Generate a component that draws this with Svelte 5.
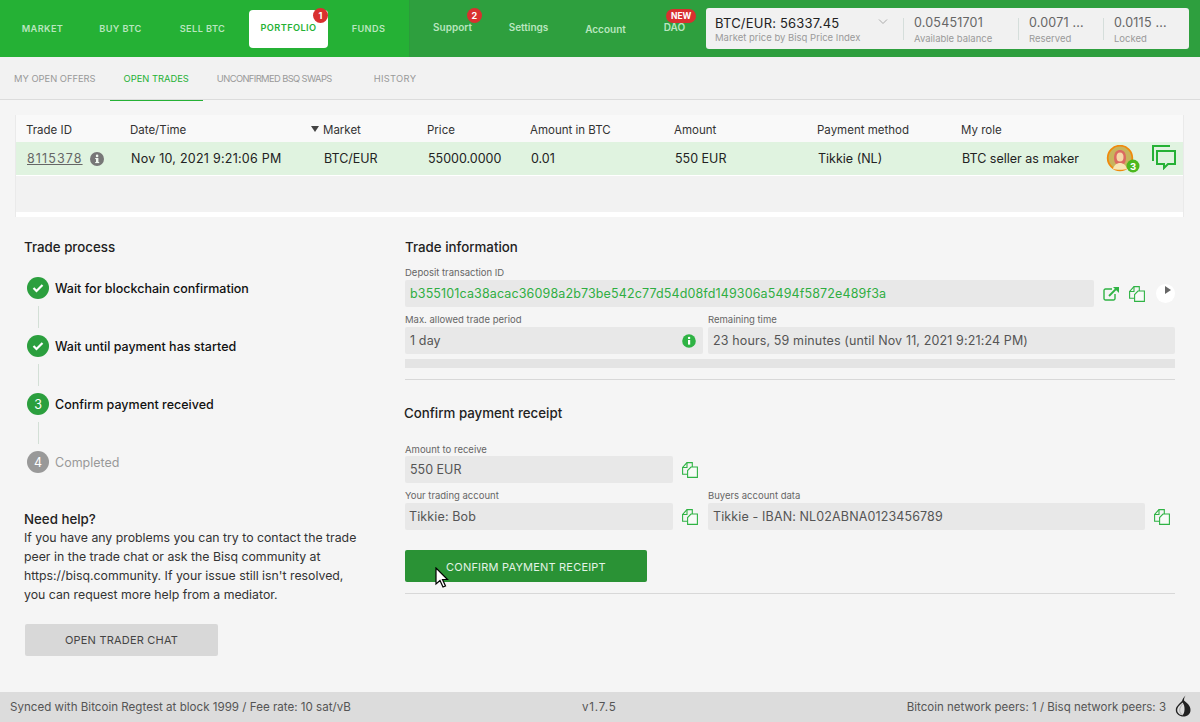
<script lang="ts">
  const mainNav = [
    { label: 'MARKET', w: 85 },
    { label: 'BUY BTC', w: 71 },
    { label: 'SELL BTC', w: 93 },
    { label: 'PORTFOLIO', w: 79, active: true, badge: '1' },
    { label: 'FUNDS', w: 81 },
  ]
  const sideNav = [
    { label: 'Support', w: 85, up: true, badge: '2' },
    { label: 'Settings', w: 67, up: true },
    { label: 'Account', w: 87, up: false },
    { label: 'DAO', w: 51, up: true, isNew: true },
  ]
  const tabs = ['MY OPEN OFFERS', 'OPEN TRADES', 'UNCONFIRMED BSQ SWAPS', 'HISTORY']
  const columns = ['Trade ID', 'Date/Time', 'Market', 'Price', 'Amount in BTC', 'Amount', 'Payment method', 'My role']
  const steps = [
    { label: 'Wait for blockchain confirmation', state: 'done' },
    { label: 'Wait until payment has started', state: 'done' },
    { label: 'Confirm payment received', state: 'current', n: 3 },
    { label: 'Completed', state: 'todo', n: 4 },
  ]
</script>

{#snippet copyIcon()}
  <svg class="icon" width="16" height="16" viewBox="0 0 16 16" fill="none" stroke="#2fb344" stroke-width="1.1">
    <path d="M5.500 12.300H.6V5.500L5 .6H10.300V5" />
    <path d="M5 .6V5.500H.6" />
    <path d="M9 5H15.400V15.400H5.600V8.500z" fill="#f8fbf8" />
  </svg>
{/snippet}

<div class="page">
  <header class="topbar">
    <nav class="main-nav">
      {#each mainNav as item}
        <div class="nav-item" class:active={item.active} style="width: {item.w}px">
          {item.label}
          {#if item.badge}<span class="badge">{item.badge}</span>{/if}
        </div>
      {/each}
    </nav>
    <nav class="side-nav">
      {#each sideNav as item}
        <div class="side-item" class:up={item.up} style="width: {item.w}px">
          <span class="side-label">
            {item.label}
            {#if item.badge}<span class="badge">{item.badge}</span>{/if}
            {#if item.isNew}<span class="badge new">NEW</span>{/if}
          </span>
        </div>
      {/each}
      <div class="balance-box">
        <div class="price-cell">
          <div class="price">BTC/EUR: 56337.45</div>
          <div class="caption">Market price by Bisq Price Index</div>
          <svg class="chevron" width="10" height="6" viewBox="0 0 10 6" fill="none" stroke="#aaa" stroke-width="1"><path d="M1 .5l4 4 4-4" /></svg>
        </div>
        <div class="bal-cell first">
          <div class="bal">0.05451701</div>
          <div class="caption">Available balance</div>
        </div>
        <div class="bal-cell second">
          <div class="bal">0.0071 ...</div>
          <div class="caption">Reserved</div>
        </div>
        <div class="bal-cell third">
          <div class="bal">0.0115 ...</div>
          <div class="caption">Locked</div>
        </div>
      </div>
    </nav>
  </header>

  <div class="tabs">
    {#each tabs as tab, i}
      <div class="tab" class:selected={i === 1}>{tab}</div>
    {/each}
  </div>

  <section class="table">
    <div class="row head">
      {#each columns as col, i}
        <div class="cell">
          {#if i === 2}<span class="sort"></span>{/if}{col}
        </div>
      {/each}
    </div>
    <div class="row selected-row">
      <div class="cell trade-id">
        <u>8115378</u>
        <svg width="14" height="14" viewBox="0 0 14 14"><circle cx="7" cy="7" r="7" fill="#777" /><rect x="6" y="6" width="2.400" height="5" fill="#f0f8f0" /><rect x="5.200" y="6" width="2" height="1.100" fill="#f0f8f0" /><rect x="5.200" y="10" width="4" height="1.100" fill="#f0f8f0" /><circle cx="7.100" cy="3.900" r="1.300" fill="#f0f8f0" /></svg>
      </div>
      <div class="cell date">Nov 10, 2021 9:21:06 PM</div>
      <div class="cell">BTC/EUR</div>
      <div class="cell">55000.0000</div>
      <div class="cell">0.01</div>
      <div class="cell">550 EUR</div>
      <div class="cell">Tikkie (NL)</div>
      <div class="cell">BTC seller as maker</div>
      <div class="row-icons">
        <svg class="avatar" width="34" height="32" viewBox="0 0 34 32">
          <circle cx="14" cy="13" r="12.300" fill="#c8b45c" stroke="#f08a0c" stroke-width="1.800" />
          <path d="M8 13c0-6 3-8 6-8s6 2 6 8c0 3-1 5-2 6h-8c-1-1-2-3-2-6z" fill="#dc6a60" />
          <ellipse cx="14" cy="12" rx="3.500" ry="4.500" fill="#f6d8a8" />
          <path d="M7 24c1-4 4-6 7-6s6 2 7 6c-2 1-12 1-14 0z" fill="#f8e6b4" />
          <circle cx="27" cy="21" r="6.500" fill="#4cb81e" />
          <text x="27" y="24.500" class="avatar-num">3</text>
        </svg>
        <svg class="chat" width="26" height="26" viewBox="0 0 26 26" fill="none" stroke="#25b135" stroke-width="2">
          <path d="M19 2H2v15" />
          <path d="M6 7h18v13h-7l-4 4v-4H6z" />
        </svg>
      </div>
    </div>
    <div class="empty-row"></div>
  </section>

  <main class="content">
    <aside class="process">
      <h3 class="title">Trade process</h3>
      <ol class="steps">
        {#each steps as step, i}
          <li class="step {step.state}">
            <span class="dot">
              {#if step.state === 'done'}
                <svg width="12" height="10" viewBox="0 0 12 10" fill="none" stroke="#fff" stroke-width="2.200"><path d="M1.500 5l3 3 6-6" /></svg>
              {:else}
                {step.n}
              {/if}
            </span>
            <span class="step-label">{step.label}</span>
          </li>
          {#if i < steps.length - 1}<li class="connector"></li>{/if}
        {/each}
      </ol>
      <h4 class="help-title">Need help?</h4>
      <p class="help">If you have any problems you can try to contact the trade peer in the trade chat or ask the Bisq community at https://bisq.community. If your issue still isn't resolved, you can request more help from a mediator.</p>
      <button class="chat-btn">OPEN TRADER CHAT</button>
    </aside>

    <div class="details">
      <h3 class="title">Trade information</h3>
      <div class="label first-label">Deposit transaction ID</div>
      <div class="line">
        <div class="field txid">b355101ca38acac36098a2b73be542c77d54d08fd149306a5494f5872e489f3a</div>
        <svg class="open" width="17" height="16" viewBox="0 0 17 16" fill="none" stroke="#2fb344" stroke-width="1.400">
          <path d="M9 3H2.500a1.500 1.500 0 0 0-1.500 1.500v8A1.500 1.500 0 0 0 2.500 14h8a1.500 1.500 0 0 0 1.500-1.500V8" />
          <path d="M6 10l8-8" stroke-width="1.800" />
          <path d="M10 1h6v6z" fill="#2fb344" stroke="none" />
        </svg>
        <span class="copy-a">{@render copyIcon()}</span>
        <span class="play"><span class="play-tri"></span></span>
      </div>
      <div class="two">
        <div class="col period">
          <div class="label">Max. allowed trade period</div>
          <div class="field with-info">1 day
            <svg width="14" height="14" viewBox="0 0 14 14"><circle cx="7" cy="7" r="6.800" fill="#2fb344" /><rect x="6" y="6" width="2.200" height="4.600" fill="#fff" /><circle cx="7.100" cy="3.900" r="1.200" fill="#fff" /></svg>
          </div>
        </div>
        <div class="col grow">
          <div class="label">Remaining time</div>
          <div class="field">23 hours, 59 minutes (until Nov 11, 2021 9:21:24 PM)</div>
        </div>
      </div>
      <div class="progress"></div>
      <hr class="rule top-rule" />

      <h3 class="title receipt">Confirm payment receipt</h3>
      <div class="label amount-label">Amount to receive</div>
      <div class="line">
        <div class="field short amount">550 EUR</div>
        <span class="copy-b">{@render copyIcon()}</span>
      </div>
      <div class="two account-row">
        <div class="col">
          <div class="label">Your trading account</div>
          <div class="line">
            <div class="field short">Tikkie: Bob</div>
            <span class="copy-b">{@render copyIcon()}</span>
          </div>
        </div>
        <div class="col buyer">
          <div class="label">Buyers account data</div>
          <div class="line">
            <div class="field buyer-field">Tikkie - IBAN: NL02ABNA0123456789</div>
            <span class="copy-b">{@render copyIcon()}</span>
          </div>
        </div>
      </div>
      <div class="confirm-wrap">
        <button class="confirm">CONFIRM PAYMENT RECEIPT</button>
        <svg class="cursor" width="14" height="21" viewBox="0 0 14 21"><path d="M1 1v16l4-3.500 3 6.500 2.500-1-3-6.500H12.500z" fill="#fff" stroke="#000" stroke-width="1.200" /></svg>
      </div>
      <hr class="rule" />
    </div>
  </main>

  <footer class="footer">
    <span class="sync">Synced with Bitcoin Regtest at block 1999 / Fee rate: 10 sat/vB</span>
    <span class="version">v1.7.5</span>
    <span class="peers">Bitcoin network peers: 1 / Bisq network peers: 3</span>
    <svg class="onion" width="16" height="22" viewBox="0 0 16 22">
      <path d="M10.500 .5C9.500 2 9 3.500 9 5.500c3 2.500 6.500 5 6.500 9.500 0 4-3 6.500-7 6.500S.8 19 .8 15c0-4 3.700-6 6.200-9 .5-2 2-4 3.500-5.500z" fill="#222" />
      <path d="M7.500 7.500C5 10 2.200 11.800 2.200 15.300c0 2.500 2.300 4.700 5.300 5 2.500-2 3-9.500 0-12.800z" fill="#ddd" />
      <path d="M7.500 9c-1.500 2-2.800 3.800-2.800 6.300 0 2 1 3.800 2.800 4.500" fill="none" stroke="#999" stroke-width=".7" />
    </svg>
  </footer>
</div>

<style>
  :global(body) {
    margin: 0;
    background: #f5f5f5;
    font-family: Inter, 'Noto Sans', sans-serif;
    color: #222;
  }

  .page {
    width: 1200px;
    height: 722px;
    display: flex;
    flex-direction: column;
    overflow: hidden;
    font-size: 12.500px;
  }

  .topbar {
    display: flex;
    height: 57px;
    flex: none;
    box-sizing: border-box;
  }

  .main-nav {
    display: flex;
    width: 409px;
    background: #25b135;
    border-right: 1px solid #2b9c3b;
    align-items: center;
  }

  .nav-item {
    position: relative;
    text-align: center;
    font-size: 9.200px;
    font-weight: 600;
    letter-spacing: 0.4px;
    color: #b9e6bf;
    line-height: 38px;
    height: 38px;
    margin-top: 1px;
    flex: none;
  }

  .nav-item.active {
    background: #fff;
    color: #25b135;
    border-radius: 4px;
    line-height: 36px;
    margin-top: 0;
  }

  .badge {
    position: absolute;
    top: -2px;
    right: 0;
    width: 15px;
    height: 15px;
    border-radius: 50%;
    background: #d9302f;
    color: #fff;
    font-size: 9px;
    font-weight: 700;
    line-height: 15px;
    text-align: center;
    letter-spacing: 0;
  }

  .side-nav {
    flex: 1;
    display: flex;
    background: #2e9f3e;
    align-items: center;
  }

  .side-item {
    flex: none;
    text-align: center;
    font-size: 10px;
    font-weight: 600;
    color: #b9e6bf;
  }

  .side-item.up {
    padding-bottom: 4px;
  }

  .side-label {
    position: relative;
  }

  .side-item .badge {
    top: -13px;
    right: -10px;
  }

  .side-item .badge.new {
    width: 30px;
    height: 14px;
    line-height: 14px;
    border-radius: 8px;
    font-size: 8.500px;
    top: -12px;
    right: -11px;
  }

  .balance-box {
    margin-left: 6px;
    width: 483px;
    height: 41px;
    background: #f1f1f1;
    border-radius: 3px;
    display: flex;
    margin-top: -1px;
    flex: none;
  }

  .price-cell {
    position: relative;
    width: 198px;
    padding-left: 9px;
    box-sizing: border-box;
    border-right: 1px solid #d5dedb;
    height: 22px;
    margin-top: 10px;
    flex: none;
  }

  .price {
    font-size: 13px;
    color: #222;
    margin-top: -4px;
    line-height: 18px;
    letter-spacing: 0.2px;
  }

  .caption {
    font-size: 9.500px;
    color: #9a9a9a;
    line-height: 14px;
    white-space: nowrap;
  }

  .price + .caption {
    margin-top: -1px;
  }

  .chevron {
    position: absolute;
    left: 172px;
    top: 1px;
  }

  .bal-cell {
    height: 22px;
    margin-top: 10px;
    box-sizing: border-box;
    padding-left: 10px;
    border-right: 1px solid #d5dedb;
    flex: none;
  }

  .bal-cell.first { width: 115px; }
  .bal-cell.second { width: 85px; }
  .bal-cell.third { width: 80px; border-right: 0; }

  .bal {
    font-size: 12.500px;
    color: #666;
    line-height: 18px;
    margin-top: -4px;
    letter-spacing: 0.2px;
  }

  .tabs {
    display: flex;
    height: 43px;
    flex: none;
    box-sizing: border-box;
    border-bottom: 1px solid #dcdcdc;
    background: #f2f2f2;
  }

  .tab {
    font-size: 9.350px;
    color: #999;
    padding: 0 14px;
    line-height: 43px;
    white-space: nowrap;
  }

  .tab:nth-child(3) {
    letter-spacing: -0.6px;
    padding-right: 28px;
  }

  .tab:nth-child(4) {
    letter-spacing: 0.3px;
  }

  .tab.selected {
    color: #25b135;
    border-bottom: 1px solid #25b135;
    height: 43px;
  }

  .table {
    margin: 15px 16px 0 15px;
    height: 102px;
    background: #fff;
    flex: none;
    border: 1px solid #eaeaea;
    border-width: 0 1px 0 1px;
    box-sizing: border-box;
  }

  .row {
    display: grid;
    grid-template-columns: 104px 193px 104px 103px 144px 143px 144px 144px 1fr;
    align-items: center;
    box-sizing: border-box;
    padding-left: 10px;
  }

  .head {
    height: 27px;
    background: #f9f9f9;
    font-size: 11.500px;
    color: #333;
    padding-top: 3px;
  }

  .sort {
    display: inline-block;
    position: absolute;
    margin: 3px 0 0 -12px;
    border: 4.500px solid transparent;
    border-top: 6px solid #444;
    border-bottom: 0;
  }

  .selected-row {
    height: 34px;
    background: #e0f3e0;
    border-bottom: 1px solid #fff;
    font-size: 12.500px;
    color: #222;
    padding-left: 11px;
  }

  .trade-id {
    display: flex;
    align-items: center;
    gap: 7px;
    color: #666;
  }

  .trade-id u {
    letter-spacing: 1.100px;
  }

  .date {
    letter-spacing: 0.25px;
  }

  .row-icons {
    display: flex;
    align-items: center;
    gap: 11px;
    white-space: nowrap;
  }

  .avatar {
    margin: 2px 0 -2px;
  }

  .chat {
    margin: -2px 0 2px;
  }

  .avatar-num {
    font-size: 9.500px;
    font-weight: 700;
    fill: #fff;
    text-anchor: middle;
  }

  .empty-row {
    height: 36px;
    background: #f2f2f2;
  }

  .content {
    flex: 1;
    display: flex;
    min-height: 0;
  }

  .process {
    width: 405px;
    box-sizing: border-box;
    padding: 21px 0 0 24px;
    flex: none;
  }

  .title {
    font-size: 13.300px;
    font-weight: 500;
    margin: 0;
    line-height: 18px;
    color: #222;
  }

  .steps {
    list-style: none;
    margin: 21px 0 0 3px;
    padding: 0;
  }

  .step {
    display: flex;
    align-items: center;
    height: 22px;
    gap: 6px;
    font-weight: 500;
    font-size: 12.500px;
    color: #111;
  }

  .dot {
    width: 22px;
    height: 22px;
    border-radius: 50%;
    background: #2b9f3e;
    color: #fff;
    display: flex;
    align-items: center;
    justify-content: center;
    font-size: 12.500px;
    font-weight: 400;
    flex: none;
  }

  .step.todo { color: #999; font-weight: 400; }
  .step.todo .dot { background: #999; }

  .connector {
    width: 1px;
    height: 22px;
    margin: 7px 0 7px 11px;
    background: #d3dfd6;
  }

  .help-title {
    font-size: 13.300px;
    font-weight: 500;
    margin: 38px 0 0;
    line-height: 17px;
  }

  .help {
    margin: 0;
    width: 340px;
    font-size: 12.300px;
    line-height: 19px;
    color: #333;
  }

  .chat-btn {
    display: block;
    margin: 20px 0 0 1px;
    width: 193px;
    height: 32px;
    border: 0;
    border-radius: 2px;
    background: #d8d8d8;
    color: #444;
    font-family: inherit;
    font-size: 11px;
    letter-spacing: 0.2px;
    padding-top: 1px;
  }

  .details {
    flex: none;
    width: 770px;
    padding-top: 21px;
  }

  .label {
    font-size: 9.500px;
    color: #666;
    line-height: 12px;
    margin-bottom: 1px;
  }

  .first-label {
    margin-top: 11px;
  }

  .line {
    display: flex;
    align-items: center;
  }

  .field {
    height: 27px;
    line-height: 27px;
    background: #e8e8e8;
    border-radius: 2px;
    padding: 0 5px;
    box-sizing: border-box;
    color: #555;
    font-size: 12.500px;
    flex: 1;
    letter-spacing: 0.13px;
    white-space: nowrap;
    overflow: hidden;
  }

  .txid {
    flex: none;
    width: 689px;
    color: #2fae42;
  }

  .open { margin-left: 9px; }
  .copy-a { margin-left: 9px; display: flex; }

  .play {
    position: relative;
    margin-left: 11px;
    width: 19px;
    height: 19px;
    border-radius: 50%;
    background: #fff;
    flex: none;
  }

  .play-tri {
    position: absolute;
    left: 9px;
    top: 2px;
    border: 4px solid transparent;
    border-left: 6px solid #666;
    border-right: 0;
  }

  .two {
    display: flex;
    gap: 5px;
    margin-top: 7px;
  }

  .col { flex: none; }
  .col.period { width: 298px; }
  .col.grow { flex: 1; }

  .with-info {
    display: flex;
    align-items: center;
    justify-content: space-between;
    padding-right: 7px;
  }

  .progress {
    height: 9px;
    margin-top: 5px;
    background: #e4e4e4;
  }

  .rule {
    margin: 0;
    border: 0;
    border-top: 1px solid #d8d8d8;
  }

  .top-rule {
    margin-top: 11px;
  }

  .title.receipt {
    margin: 24px 0 0 -1px;
  }

  .amount-label {
    margin-top: 22px;
    margin-bottom: 0;
  }

  .short {
    flex: none;
    width: 268px;
    padding-left: 4px;
  }

  .amount {
    padding-left: 5px;
    letter-spacing: 0;
  }

  .copy-b {
    display: flex;
    margin-left: 9px;
  }

  .account-row {
    margin-top: 7px;
  }

  .buyer {
    margin-left: 5px;
  }

  .buyer-field {
    flex: none;
    width: 437px;
  }

  .confirm-wrap {
    position: relative;
    margin-top: 20px;
    height: 32px;
  }

  .confirm {
    width: 242px;
    height: 32px;
    border: 0;
    border-radius: 2px;
    background: #2a9235;
    color: #e4f3e6;
    font-family: inherit;
    font-size: 11px;
    letter-spacing: 0.2px;
    padding: 1px 0 0;
  }

  .cursor {
    position: absolute;
    left: 30px;
    top: 17px;
  }

  .confirm-wrap + .rule {
    margin-top: 11px;
  }

  .footer {
    flex: none;
    height: 30px;
    background: #dcdcdc;
    display: grid;
    grid-template-columns: 572px 1fr auto 34px;
    align-items: center;
    font-size: 11.600px;
    color: #555;
    padding-left: 10px;
    box-sizing: border-box;
  }

  .version {
    letter-spacing: 0.8px;
  }

  .peers {
    font-size: 11.500px;
  }

  .onion {
    margin: -3px 0 0 9px;
  }
</style>
